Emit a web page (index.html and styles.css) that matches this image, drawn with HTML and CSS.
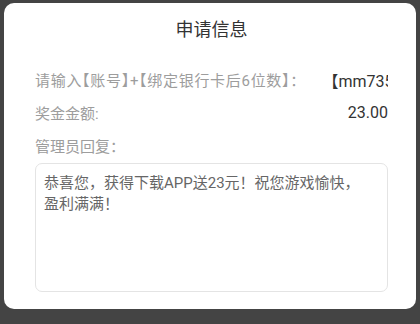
FILE: index.html
```html
<!DOCTYPE html>
<html lang="zh-CN">
<head>
<meta charset="utf-8">
<title>申请信息</title>
<link rel="stylesheet" href="styles.css">
</head>
<body>
<div class="dialog">
  <div class="title">申请信息</div>
  <div class="rows">
    <div class="row">
      <span class="label label-long">请输入【账号】+【绑定银行卡后6位数】：</span>
      <span class="value">【mm73520】+【628431】</span>
    </div>
    <div class="row">
      <span class="label">奖金金额:</span>
      <span class="value">23.00</span>
    </div>
    <div class="row">
      <span class="label">管理员回复：</span>
    </div>
  </div>
  <div class="reply">恭喜您，获得下载APP送23元！祝您游戏愉快，<br>盈利满满！</div>
</div>
</body>
</html>
```
FILE: styles.css
```css
html, body {
  margin: 0;
  padding: 0;
}
body {
  width: 420px;
  height: 324px;
  background: #444444;
  padding: 3px 4px 0;
  box-sizing: border-box;
  font-family: Roboto, "Noto Sans CJK SC", sans-serif;
  overflow: hidden;
}
.dialog {
  background: #ffffff;
  border-radius: 10px;
  padding: 15px 28px 17px 31px;
}
.title {
  font-size: 18px;
  line-height: 24px;
  color: #333333;
  text-align: center;
}
.rows {
  margin-top: 21px;
}
.row {
  display: flex;
  align-items: center;
  height: 33px;
  column-gap: 24px;
  white-space: nowrap;
}
.label {
  flex: none;
  font-size: 15px;
  color: #9d9d9d;
}
.label-long {
  font-feature-settings: "halt";
  letter-spacing: 0.7px;
}
.value {
  margin-left: auto;
  min-width: 0;
  overflow: hidden;
  font-size: 16px;
  color: #333333;
}
.reply {
  margin-top: 1px;
  height: 129px;
  box-sizing: border-box;
  border: 1px solid #e4e4e4;
  border-radius: 7px;
  padding: 9px 8px;
  font-size: 15px;
  line-height: 21px;
  color: #666666;
}
```
